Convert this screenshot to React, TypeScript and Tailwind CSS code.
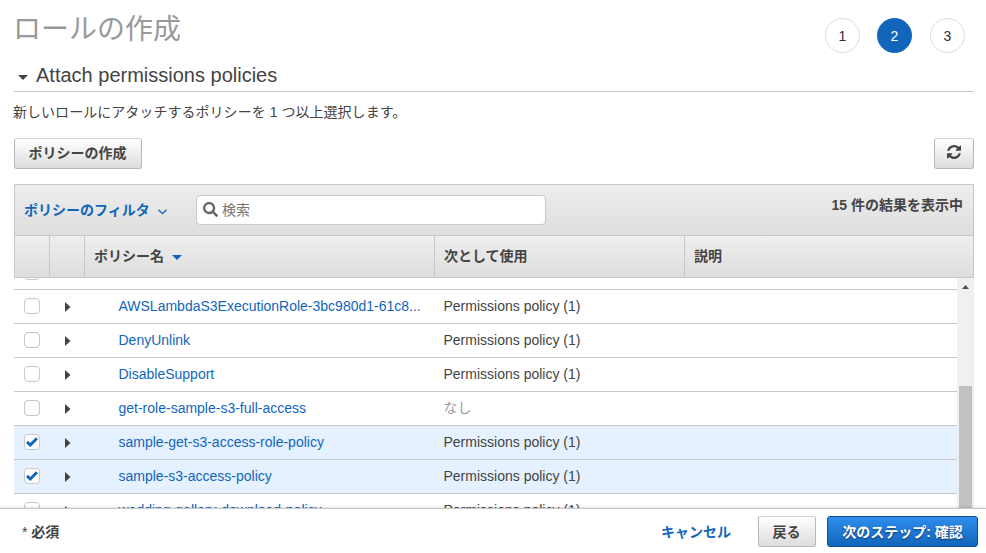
import type { ReactNode } from "react";
import { FaSearch } from "react-icons/fa";

type Policy = { name: string; used: boolean; checked?: boolean };

const policies: Policy[] = [
  { name: "AWSLambdaS3ExecutionRole-3bc980d1-61c8...", used: true },
  { name: "DenyUnlink", used: true },
  { name: "DisableSupport", used: true },
  { name: "get-role-sample-s3-full-access", used: false },
  { name: "sample-get-s3-access-role-policy", used: true, checked: true },
  { name: "sample-s3-access-policy", used: true, checked: true },
  { name: "wedding-gallery-download-policy", used: true },
];

function Checkbox({ checked }: { checked?: boolean }) {
  return (
    <span className="flex h-4 w-4 items-center justify-center rounded-[4px] border border-[#c8c8c8] bg-white">
      {checked && (
        <svg width="12" height="10" viewBox="0 0 12 10" fill="none" stroke="#1166bb" strokeWidth="2.9">
          <path d="M1 4.900 4.300 8 11 1.300" />
        </svg>
      )}
    </span>
  );
}

function Row({ policy }: { policy: Policy }) {
  return (
    <div
      className={`flex h-[34px] shrink-0 items-center border-b border-[#c8c8c8] pb-px ${
        policy.checked ? "bg-[#e5f1ff]" : "bg-white"
      }`}
    >
      <div className="flex w-[35px] justify-center">
        <Checkbox checked={policy.checked} />
      </div>
      <div className="w-[35px] pl-4">
        <svg width="6" height="10" viewBox="0 0 6 10" className="mt-0.5" fill="#444">
          <path d="M0 0 5.500 5 0 10z" />
        </svg>
      </div>
      <div className="w-[350px] pl-[34.500px] whitespace-nowrap text-[#1166bb]">{policy.name}</div>
      <div className={`w-[250px] pl-[9.500px] ${policy.used ? "" : "text-[#999]"}`}>
        {policy.used ? "Permissions policy (1)" : "なし"}
      </div>
    </div>
  );
}

function Step({ n, active }: { n: number; active?: boolean }) {
  return (
    <span
      className={`flex h-[35px] w-[35px] items-center justify-center rounded-full border text-sm ${
        active ? "border-[#1166bb] bg-[#1166bb] text-white" : "border-[#ddd] bg-white text-[#333]"
      }`}
    >
      {n}
    </span>
  );
}

function Button({ className, children }: { className: string; children: ReactNode }) {
  return (
    <button
      className={`flex h-[31px] items-center justify-center rounded-[3px] border border-[#b8b8b8] border-t-[#d0d0d0] bg-linear-to-b from-white to-[#dddddd] pr-px text-sm font-bold ${className}`}
    >
      {children}
    </button>
  );
}

export default function App() {
  return (
    <div className="flex h-[553px] w-[986px] flex-col overflow-hidden bg-white font-['Liberation_Sans','Noto_Sans_CJK_JP',sans-serif] text-sm leading-5 text-[#444]">
      <main className="flex min-h-0 flex-1 flex-col overflow-hidden pr-3 pl-3.5">
        <header className="flex h-[60px] shrink-0 justify-between pr-[9px]">
          <h1 className="-ml-px pt-2.5 text-[28px] leading-10 text-[#999]">ロールの作成</h1>
          <div className="flex pt-[18px]">
            <Step n={1} />
            <span className="w-[17px]" />
            <Step n={2} active />
            <span className="w-[18px]" />
            <Step n={3} />
          </div>
        </header>
        <h2 className="flex h-8 shrink-0 items-center gap-2 border-b border-[#c8c8c8] pl-1 text-xl">
          <svg width="10" height="5" viewBox="0 0 10 5" className="mt-[3px]" fill="#444">
            <path d="M0 0h10L5 5z" />
          </svg>
          <span className="pb-0.5">Attach permissions policies</span>
        </h2>
        <p className="mt-2.5 -ml-px h-5 shrink-0 tracking-[0.04px]">新しいロールにアタッチするポリシーを 1 つ以上選択します。</p>
        <div className="mt-4 flex shrink-0 justify-between">
          <Button className="w-32 pb-0.5">ポリシーの作成</Button>
          <Button className="w-10 pb-0.5">
            <svg width="14" height="14" viewBox="0 0 1536 1536" className="mb-0.5 ml-px" fill="#444">
              <path d="M1511 928q0 5-1 7-64 268-268 434.500T764 1536q-146 0-282.500-55T238 1324l-129 129q-19 19-45 19t-45-19-19-45V960q0-26 19-45t45-19h448q26 0 45 19t19 45-19 45l-137 137q71 66 161 102t187 36q134 0 250-65t186-179q11-17 53-117 8-23 30-23h192q13 0 22.500 9.500t9.500 22.500zm25-800v448q0 26-19 45t-45 19h-448q-26 0-45-19t-19-45 19-45l138-138Q969 256 768 256q-134 0-250 65T332 500q-11 17-53 117-8 23-30 23H50q-13 0-22.500-9.500T18 608v-7q65-268 270-434.500T768 0q146 0 284 55.500T1297 212l130-129q19-19 45-19t45 19 19 45z" />
            </svg>
          </Button>
        </div>
        <section className="mt-[15px] shrink-0 border border-[#c8c8c8] font-bold">
          <div className="flex h-[51px] border-b border-[#c8c8c8] bg-linear-to-b from-[#eee] to-[#dedede] pl-[9px]">
            <div className="flex w-[172px] items-center gap-2 text-[#1166bb]">
              ポリシーのフィルタ
              <svg width="9" height="6" viewBox="0 0 9 6" fill="none" stroke="#1166bb" strokeWidth="1.3" className="mt-[3px]">
                <path d="M.5.7 4.500 4.700 8.500.7" />
              </svg>
            </div>
            <div className="mt-2.5 flex h-[30px] w-[350px] items-center gap-1 rounded-[4px] border border-[#c8c8c8] bg-white pl-1.5 font-normal text-[#757575]">
              <FaSearch className="mb-0.5 h-[15px] w-[15px] text-[#666]" />
              検索
            </div>
            <span className="mt-2.5 mr-2.5 ml-auto">15 件の結果を表示中</span>
          </div>
          <div className="flex h-[41px] items-stretch bg-linear-to-b from-[#eee] to-[#dedede]">
            <div className="w-[35px] border-r border-[#c8c8c8]" />
            <div className="w-[35px] border-r border-[#c8c8c8]" />
            <div className="flex w-[350px] items-center gap-2 border-r border-[#c8c8c8] pb-0.5 pl-[9px]">
              ポリシー名
              <svg width="10" height="5" viewBox="0 0 10 5" fill="#1166bb" className="mt-[3px]">
                <path d="M0 0h10L5 5z" />
              </svg>
            </div>
            <div className="flex w-[250px] items-center border-r border-[#c8c8c8] pb-0.5 pl-[9px]">次として使用</div>
            <div className="flex items-center pb-0.5 pl-[9px]">説明</div>
          </div>
        </section>
        <div className="flex min-h-0 flex-1">
          <div className="flex w-[943px] flex-col justify-start overflow-hidden">
            <div className="flex h-3 shrink-0 items-end overflow-hidden border-b border-[#c8c8c8] pb-[9px] pl-2.5">
              <Checkbox />
            </div>
            {policies.map((p) => (
              <Row key={p.name} policy={p} />
            ))}
          </div>
          <div className="flex w-[17px] flex-col items-center bg-[#f0f0f0]">
            <svg width="7" height="4" viewBox="0 0 7 4" className="mt-[7px]" fill="#505050">
              <path d="M3.500 0 7 4H0z" />
            </svg>
            <div className="mt-[97px] w-[13px] flex-1 bg-[#c1c1c1]" />
          </div>
        </div>
      </main>
      <footer className="z-10 flex h-[45px] shrink-0 items-center border-t border-[#c8c8c8] bg-white pr-2 pl-[22px] font-bold shadow-[0_-1px_2px_rgba(0,0,0,0.12)]">
        <span className="pt-0.5">
          <span className="font-normal">*</span> 必須
        </span>
        <span className="mr-[27px] ml-auto pt-0.5 text-[#1166bb]">キャンセル</span>
        <Button className="mr-[11px] w-[58px] pt-0.5">戻る</Button>
        <button className="flex h-[31px] w-[151px] items-center justify-center rounded-[3px] border border-[#0d4f94] bg-linear-to-b from-[#2e8ded] to-[#1166bb] pt-0.5 font-bold text-white [text-shadow:0_1px_2px_rgba(0,0,0,0.5)]">
          次のステップ: 確認
        </button>
      </footer>
    </div>
  );
}
